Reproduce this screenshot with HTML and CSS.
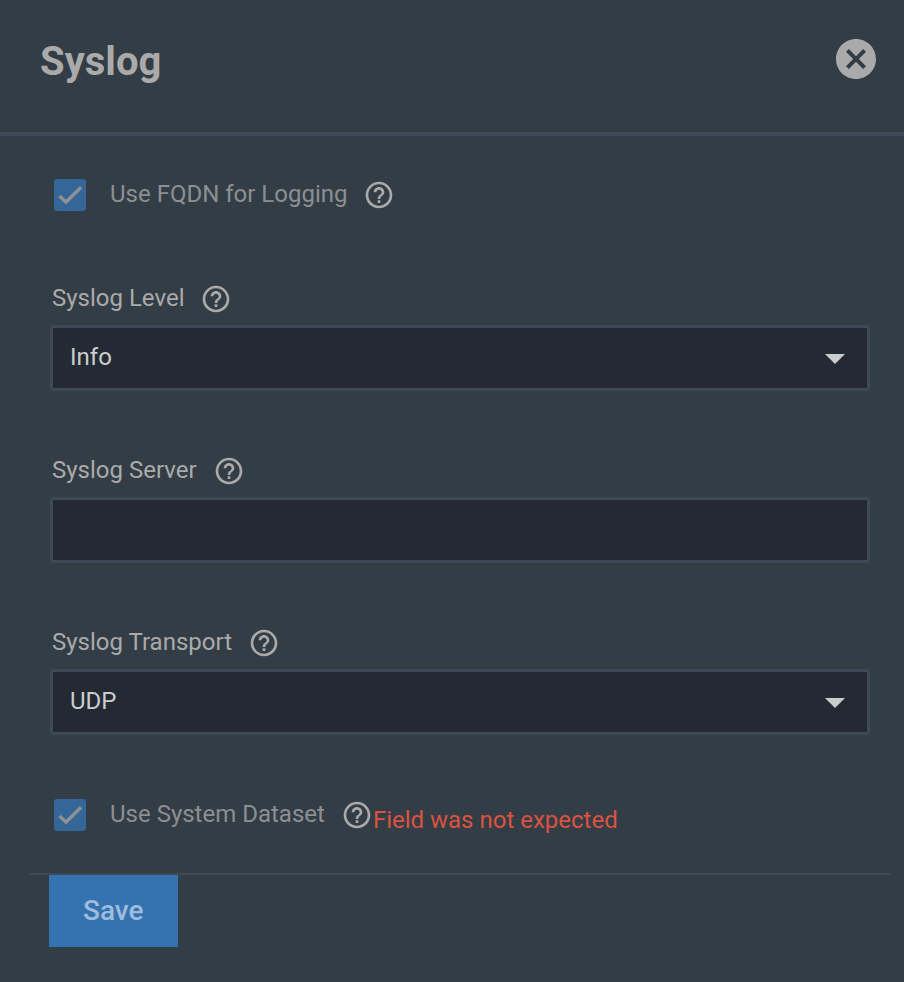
FILE: index.html
```
<!DOCTYPE html>
<html lang="en">
<head>
<meta charset="utf-8">
<meta name="viewport" content="width=device-width, initial-scale=1">
<title>Syslog</title>
<link rel="stylesheet" href="styles.css">
</head>
<body>
  <svg class="sprite" aria-hidden="true">
    <symbol id="help" viewBox="0 0 24 24">
      <path d="M11 18h2v-2h-2v2zm1-16C6.480 2 2 6.480 2 12s4.480 10 10 10 10-4.480 10-10S17.520 2 12 2zm0 18c-4.410 0-8-3.590-8-8s3.590-8 8-8 8 3.590 8 8-3.590 8-8 8zm0-14c-2.210 0-4 1.790-4 4h2c0-1.100.9-2 2-2s2 .9 2 2c0 2-3 1.750-3 5h2c0-2.250 3-2.500 3-5 0-2.210-1.790-4-4-4z"/>
    </symbol>
    <symbol id="check" viewBox="0 0 24 24">
      <path d="M4.100 12.700L9 17.400 20.300 6.200" fill="none" stroke="currentColor" stroke-width="2.600"/>
    </symbol>
    <symbol id="arrow" viewBox="0 0 20 10">
      <path d="M0 0h20L10 10z"/>
    </symbol>
  </svg>

  <header class="header">
    <h1 class="title">Syslog</h1>
    <button type="button" class="close" aria-label="Close">
      <svg class="close-icon" viewBox="2 2 20 20"><path d="M12 2C6.470 2 2 6.470 2 12s4.470 10 10 10 10-4.470 10-10S17.530 2 12 2zm5 13.590L15.590 17 12 13.410 8.410 17 7 15.590 10.590 12 7 8.410 8.410 7 12 10.590 15.590 7 17 8.410 13.410 12 17 15.590z"/></svg>
    </button>
  </header>

  <form class="form">
    <div class="fields">
      <div class="check-row">
        <span class="checkbox">
          <input type="checkbox" id="fqdn" checked>
          <svg><use href="#check"/></svg>
        </span>
        <label class="check-label" for="fqdn">Use FQDN for Logging</label>
        <svg class="help"><use href="#help"/></svg>
      </div>

      <div class="field field-first">
        <div class="label-row">
          <label for="level">Syslog Level</label>
          <svg class="help"><use href="#help"/></svg>
        </div>
        <div class="select">
          <select class="control" id="level">
            <option>Info</option>
          </select>
          <svg class="arrow"><use href="#arrow"/></svg>
        </div>
      </div>

      <div class="field">
        <div class="label-row">
          <label for="server">Syslog Server</label>
          <svg class="help"><use href="#help"/></svg>
        </div>
        <input class="control" type="text" id="server">
      </div>

      <div class="field">
        <div class="label-row">
          <label for="transport">Syslog Transport</label>
          <svg class="help"><use href="#help"/></svg>
        </div>
        <div class="select">
          <select class="control" id="transport">
            <option>UDP</option>
          </select>
          <svg class="arrow"><use href="#arrow"/></svg>
        </div>
      </div>

      <div class="check-row">
        <span class="checkbox">
          <input type="checkbox" id="dataset" checked aria-describedby="dataset-error">
          <svg><use href="#check"/></svg>
        </span>
        <label class="check-label" for="dataset">Use System Dataset</label>
        <svg class="help"><use href="#help"/></svg>
        <span class="error" id="dataset-error">Field was not expected</span>
      </div>
    </div>

    <div class="actions">
      <button type="button" class="save">Save</button>
    </div>
  </form>
</body>
</html>
```

FILE: styles.css
```
* {
  box-sizing: border-box;
}
body {
  margin: 0;
  background-color: #333d46;
  color: #aaaaaa;
  font-family: Roboto, sans-serif;
  font-size: 24px;
  line-height: 32px;
}
svg {
  display: block;
  fill: currentColor;
}
.sprite {
  display: none;
}

.header {
  display: flex;
  align-items: center;
  justify-content: space-between;
  padding: 38px 28px 46px 40px;
  border-bottom: 4px solid #3d4955;
}
.title {
  margin: 0;
  font-size: 40px;
  line-height: 48px;
  font-weight: bold;
}
.close {
  padding: 0 0 6px;
  border: 0;
  background: none;
  color: inherit;
}
.close-icon {
  width: 40px;
  height: 40px;
}

.form {
  padding: 43px 13px 35px 29px;
}
.fields {
  display: flex;
  flex-direction: column;
  gap: 64px;
  padding: 0 21px 36px;
}
.field-first {
  margin-top: 8px;
}
.label-row {
  display: flex;
  gap: 16px;
  padding-left: 2px;
  margin-bottom: 10px;
}
.label-row label,
.check-label {
  line-height: 30px;
}
.help {
  width: 32px;
  height: 32px;
  flex: none;
}

.control {
  display: block;
  width: 100%;
  height: 66px;
  padding: 0 17px 2px;
  border: 3px solid #3d4955;
  border-radius: 4px;
  background-color: #242a34;
  color: #cccccc;
  font: inherit;
  appearance: none;
  outline: none;
}
.select {
  display: grid;
  align-items: center;
}
.select .control,
.arrow {
  grid-area: 1 / 1;
}
.arrow {
  width: 20px;
  height: 10px;
  margin: 2px 25px 0 0;
  justify-self: end;
  color: #cccccc;
  pointer-events: none;
}

.check-row {
  display: flex;
  align-items: flex-start;
  padding-left: 4px;
}
.checkbox {
  display: grid;
  margin-right: 24px;
}
.checkbox input,
.checkbox svg {
  grid-area: 1 / 1;
  width: 32px;
  height: 32px;
  margin: 0;
}
.checkbox input {
  appearance: none;
  border-radius: 3px;
  background-color: #356698;
}
.checkbox svg {
  color: #8f9193;
  pointer-events: none;
}
.check-label {
  margin-right: 16px;
  color: #8c8f92;
}
.error {
  padding: 5px 0 1px;
  color: #dc5240;
}

.actions {
  padding-left: 20px;
  border-top: 2px solid #3d4955;
}
.save {
  display: block;
  padding: 20px 34px;
  border: 0;
  background-color: #3572b0;
  color: #9ebddd;
  font-family: inherit;
  font-size: 28px;
  line-height: 32px;
  font-weight: 500;
}
```
